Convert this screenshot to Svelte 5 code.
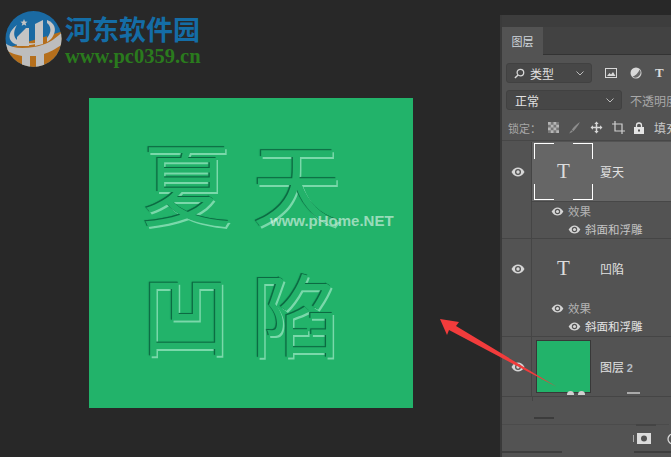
<script>
</script>

{#snippet eyeIcon()}
  <svg class="eye" viewBox="0 0 14 10" width="14" height="10" aria-hidden="true">
    <path d="M0.5 5C2.5 1.6 4.6 0.5 7 0.5S11.5 1.6 13.5 5C11.5 8.4 9.4 9.5 7 9.5S2.5 8.4 0.5 5Z" fill="#d6d6d6"/>
    <circle cx="7" cy="5" r="3" fill="#535353"/>
    <circle cx="7" cy="5" r="1.7" fill="#d6d6d6"/>
  </svg>
{/snippet}

<div class="page">
  <div class="canvas">
    <div class="line l1"><span>夏</span><span>天</span></div>
    <div class="line l2"><span>凹</span><span>陷</span></div>
  </div>

  <section class="panel">
    <div class="topstrip"></div>
    <div class="tabs"><div class="tab">图层</div></div>

    <div class="row filter">
      <div class="select s1">
        <svg viewBox="0 0 12 12" width="11" height="11"><circle cx="7" cy="5" r="3.6" fill="none" stroke="#d8d8d8" stroke-width="1.4"/><path d="M4.4 7.6L1 11" stroke="#d8d8d8" stroke-width="1.6"/></svg>
        <span>类型</span>
        <svg class="chev" viewBox="0 0 8 5" width="8" height="5"><path d="M.5.5L4 4 7.5.5" fill="none" stroke="#bbb"/></svg>
      </div>
      <svg class="ico" viewBox="0 0 12 10" width="12" height="10"><rect x=".5" y=".5" width="11" height="9" fill="none" stroke="#d8d8d8"/><path d="M2 8l2.500-3 1.500 1.500 2-2.500 2.500 4z" fill="#d8d8d8"/></svg>
      <svg class="ico" viewBox="0 0 12 12" width="12" height="12"><circle cx="6" cy="6" r="5.500" fill="#d8d8d8"/><path d="M9.500 2.500A5 5 0 0 1 2.500 9.500C5 9 8.500 6 9.500 2.500Z" fill="#6a6a6a"/></svg>
      <span class="tee">T</span>
    </div>

    <div class="row mode">
      <div class="select s2">
        <span>正常</span>
        <svg class="chev" viewBox="0 0 8 5" width="8" height="5"><path d="M.5.500L4 4 7.500.500" fill="none" stroke="#bbb"/></svg>
      </div>
      <span class="dim">不透明度</span>
    </div>

    <div class="row lock">
      <span class="dim small">锁定：</span>
      <svg viewBox="0 0 10 10" width="11" height="11"><rect width="10" height="10" fill="#777"/><path d="M0 0h2.500v2.500H0zM5 0h2.500v2.500H5zM2.500 2.500H5V5H2.500zM7.500 2.500H10V5H7.500zM0 5h2.500v2.500H0zM5 5h2.500v2.500H5zM2.500 7.500H5V10H2.500zM7.500 7.500H10V10H7.500z" fill="#b5b5b5"/></svg>
      <svg viewBox="0 0 12 12" width="13" height="13"><path d="M11 1C8 3 5 6 3.500 8L5 9.500C7 7 9.500 4.500 11 1ZM3 8.500L1 11.500 4.500 10Z" fill="#8c8c8c"/></svg>
      <svg viewBox="0 0 12 12" width="13" height="13"><path d="M6 .5L8 2.700H6.700v2.600h2.600V4L11.500 6 9.300 8V6.700H6.700v2.600H8L6 11.500 4 9.300h1.300V6.700H2.700V8L.5 6 2.700 4v1.300h2.600V2.700H4Z" fill="#d8d8d8"/></svg>
      <svg viewBox="0 0 13 13" width="13" height="13"><path d="M3 0v10h10M0 3h10v10" fill="none" stroke="#d0d0d0" stroke-width="1.200"/></svg>
      <svg viewBox="0 0 10 12" width="10" height="12"><path d="M2.500 5V3.500a2.500 2.500 0 0 1 5 0V5" fill="none" stroke="#e4e4e4" stroke-width="1.300"/><rect y="5" width="10" height="7" fill="#e4e4e4"/><rect x="4" y="7.500" width="2" height="2" fill="#535353"/></svg>
      <span class="dim fill">填充</span>
    </div>

    <div class="layers">
      <div class="layer l-a">
        <div class="eyecol">{@render eyeIcon()}</div>
        <div class="body">
          <div class="head selected">
            <div class="thumb framed">
              <i class="c tl"></i><i class="c tr"></i><i class="c bl"></i><i class="c br"></i>
              <span class="big-t">T</span>
            </div>
            <span class="name">夏天</span>
          </div>
          <div class="fx">{@render eyeIcon()}<span>效果</span></div>
          <div class="fx sub">{@render eyeIcon()}<span>斜面和浮雕</span></div>
        </div>
      </div>

      <div class="layer l-b">
        <div class="eyecol">{@render eyeIcon()}</div>
        <div class="body">
          <div class="head">
            <div class="thumb"><span class="big-t">T</span></div>
            <span class="name">凹陷</span>
          </div>
          <div class="fx">{@render eyeIcon()}<span>效果</span></div>
          <div class="fx sub bright">{@render eyeIcon()}<span>斜面和浮雕</span></div>
        </div>
      </div>

      <div class="layer l-c">
        <div class="eyecol">{@render eyeIcon()}</div>
        <div class="body">
          <div class="head">
            <div class="swatch"></div>
            <span class="name">图层 <b>2</b></span>
          </div>
        </div>
        <i class="bump b1"></i><i class="bump b2"></i><i class="frag"></i>
      </div>
    </div>

    <div class="rest">
      <i class="smudge sm0"></i>
      <i class="smudge sm1"></i>
      <i class="smudge sm2"></i>
      <i class="smudge sm3"></i>
    </div>

    <div class="foot">
      <i class="tick"></i>
      <svg viewBox="0 0 14 11" width="14" height="11"><rect width="14" height="11" fill="#dcdcdc"/><circle cx="7" cy="5.500" r="3" fill="#535353"/></svg>
      <svg viewBox="0 0 12 12" width="12" height="12"><circle cx="6" cy="6" r="5" fill="none" stroke="#d8d8d8" stroke-width="1.300"/><path d="M6 1A5 5 0 0 1 6 11Z" fill="#d8d8d8"/></svg>
      <i class="edge e1"></i><i class="edge e2"></i>
    </div>
  </section>

  <div class="logo">
    <svg class="mark" viewBox="0 0 58 58" width="58" height="58" aria-hidden="true">
      <defs><clipPath id="disc"><circle cx="29.500" cy="28" r="28"/></clipPath></defs>
      <g clip-path="url(#disc)">
        <rect width="58" height="58" fill="#1a6aa3"/>
        <path d="M0 38L60 20V60H0Z" fill="#b56f1c"/>
        <path d="M0 31C6 37 16 38 30 36C42 34 52 28 60 19V32C52 38 46 41 40 43V58H32V45H26V58H18V45C8 43 3 40 0 37Z" fill="#bdbdbd"/>
        <path d="M13 14C5 20 3 27 9 32C16 36 28 35 38 31C27 33 16 33 12 28C9 24 10 19 13 14Z" fill="#c6c6c6"/>
        <path d="M13 26L22 17H25V35H13ZM31 13L39 9V33L31 35Z" fill="#c4c4c4"/>
        <path d="M43 9C51 12 52 18 50 23C48 28 45 30 43 31Z" fill="#c4c4c4"/>
        <path d="M43 12C47 15 48 21 43 27Z" fill="#1a6aa3"/>
        <path d="M20 8l1 2.500 2.600.2-2 1.600.7 2.500-2.300-1.400-2.300 1.400.7-2.500-2-1.600 2.600-.2Z" fill="#c4c4c4"/>
      </g>
    </svg>
    <div class="brand">
      <div class="cn">河东软件园</div>
      <div class="url">www.pc0359.cn</div>
    </div>
  </div>

  <div class="mark-text">www.pHome.NET</div>

  <svg class="arrow" viewBox="0 0 120 72" width="120" height="72" aria-hidden="true">
    <path d="M0 0L19 3 16 7 117 68 9 11 7 16Z" fill="#f23c3c"/>
  </svg>
</div>

<style>
  :global(body) { margin: 0; background: #282828; }
  .page {
    position: relative;
    width: 671px;
    height: 457px;
    overflow: hidden;
    display: flex;
    align-items: flex-start;
    background: #282828;
    font-family: "Noto Sans CJK SC", "Noto Sans", sans-serif;
  }
  .canvas {
    flex: none;
    width: 324px;
    height: 310px;
    margin: 98px 0 0 89px;
    background: #22b36a;
    display: flex;
    flex-direction: column;
    font-size: 90px;
    line-height: 1;
  }
  .line { display: flex; gap: 20px; padding-left: 53px; }
  .l1 { margin-top: 37px; }
  .l2 { margin-top: 41px; padding-left: 52px; }
  .line span {
    color: #23b26a;
    text-shadow: -1px -1px 0 #0c6a42, -1.500px -1.500px 1px #12804f, 1.500px 1.500px 0.500px #7ad8aa;
  }
  .panel {
    flex: none;
    width: 171px;
    height: 442px;
    margin: 15px 0 0 87px;
    box-sizing: border-box;
    background: #535353;
    border-left: 2px solid #3a3a3a;
    color: #d4d4d4;
    font-size: 11px;
    display: flex;
    flex-direction: column;
    overflow: hidden;
    position: relative;
  }
  .topstrip { height: 12px; flex: none; background: #3d3d3d; }
  .tabs { height: 28px; flex: none; background: #424242; border-bottom: 1px solid #333; display: flex; box-sizing: border-box; }
  .tab { width: 41px; height: 28px; background: #535353; display: flex; align-items: center; justify-content: center; font-size: 11px; color: #cfd6dc; }
  .row { display: flex; align-items: center; flex: none; }
  .row > svg { flex: none; }
  .filter { height: 22px; margin-top: 7px; padding-left: 4px; gap: 13px; }
  .select {
    flex: none;
    box-sizing: border-box;
    background: #474747;
    border: 1px solid #414141;
    border-radius: 3px;
    display: flex;
    align-items: center;
    color: #e0e0e0;
    font-size: 12px;
  }
  .s1 { width: 86px; height: 20px; padding: 0 7px; gap: 5px; }
  .s2 { width: 116px; height: 20px; padding: 0 7px 0 8px; }
  .chev { margin-left: auto; }
  .ico { flex: none; }
  .tee { font-family: "Liberation Serif", serif; font-weight: 700; font-size: 13px; color: #dcdcdc; }
  .mode { height: 20px; margin-top: 6px; padding-left: 4px; gap: 8px; }
  .dim { color: #a8a8a8; font-size: 12px; white-space: nowrap; }
  .small { font-size: 11px; margin-left: 6px; }
  .lock { height: 25px; gap: 9px; border-bottom: 1px solid #474747; margin-top: 5px; margin-bottom: 1px; box-sizing: content-box; }
  .lock .small { flex: none; margin-right: -2px; }
  .fill { flex: none; margin-left: 1px; color: #c8c8c8; }
  .layers { flex: none; }
  .layer { position: relative; display: flex; border-bottom: 1px solid #454545; box-sizing: border-box; }
  .l-a { height: 97px; }
  .l-b { height: 98px; }
  .l-c { height: 60px; }
  .eyecol { flex: none; width: 30px; border-right: 1px solid #454545; box-sizing: border-box; }
  .eyecol .eye { display: block; margin: 25px 0 0 9px; }
  .body { flex: 1; min-width: 0; }
  .head { height: 60px; display: flex; align-items: center; box-sizing: border-box; border-bottom: 1px solid transparent; }
  .selected { background: #666; border-bottom-color: #474747; }
  .thumb { position: relative; flex: none; width: 59px; height: 57px; margin-left: 2px; display: flex; align-items: center; justify-content: center; }
  .big-t { font-family: "Liberation Serif", serif; font-size: 21px; color: #dcdcdc; line-height: 1; }
  .c { position: absolute; width: 19px; height: 15px; border: 0 solid #fff; }
  .tl { left: 0; top: 0; border-width: 1px 0 0 1px; }
  .tr { right: 0; top: 0; border-width: 1px 1px 0 0; }
  .bl { left: 0; bottom: 0; border-width: 0 0 1px 1px; }
  .br { right: 0; bottom: 0; border-width: 0 1px 1px 0; }
  .name { margin-left: 7px; font-size: 12px; color: #e2e2e2; white-space: nowrap; }
  .name b { font-family: "Liberation Sans", sans-serif; font-weight: 700; font-size: 11px; color: #b4bcc4; }
  .fx { height: 18px; display: flex; align-items: center; gap: 4px; padding-left: 19px; font-size: 11.500px; color: #b4b4b4; white-space: nowrap; }
  .fx .eye { flex: none; width: 13px; height: 9px; }
  .sub { padding-left: 36px; color: #c4c4c4; }
  .bright { color: #e4e4e4; }
  .swatch { flex: none; width: 53px; height: 51px; margin-left: 4px; background: #22b36a; border: 1px solid #383838; }
  .l-c .name { margin-left: 9px; }
  .bump { position: absolute; top: 54px; width: 7px; height: 4px; border-radius: 4px 4px 0 0; background: #d0d0d0; }
  .b1 { left: 65px; }
  .b2 { left: 76px; }
  .frag { position: absolute; top: 55px; left: 125px; width: 13px; height: 2px; background: #aaa; }
  .rest { flex: 1; position: relative; }
  .smudge { position: absolute; background: #3c3c3c; filter: blur(.6px); }
  .sm0 { left: 30px; top: 0; width: 1px; height: 4px; background: #454545; filter: none; }
  .sm1 { left: 32px; top: 20px; width: 20px; height: 2px; }
  .sm2 { left: 0; top: 27px; width: 167px; height: 1px; background: #4b4b4b; }
  .sm3 { left: 134px; top: 27px; width: 20px; height: 2px; background: #444; }
  .foot { position: relative; height: 33px; box-sizing: border-box; padding-bottom: 4px; flex: none; display: flex; align-items: center; justify-content: flex-end; gap: 16px; margin-right: -8px; }
  .tick { width: 1px; height: 7px; background: #aaa; margin-right: -13px; }
  .edge { position: absolute; bottom: 4px; height: 2px; background: #3e3e3e; }
  .e1 { left: 0; width: 60px; }
  .e2 { left: 132px; width: 40px; }
  .logo { position: absolute; left: 4px; top: 11px; display: flex; gap: 3px; }
  .mark { flex: none; }
  .brand { padding-top: 1px; }
  .cn { color: #146da6; font-size: 27px; font-weight: 700; line-height: 34px; white-space: nowrap; }
  .url { color: #2a7a1d; font-family: "Liberation Serif", serif; font-weight: 700; font-size: 20.500px; line-height: 20px; white-space: nowrap; }
  .mark-text { position: absolute; left: 270px; top: 212px; color: rgba(255,255,255,.55); font-family: "Liberation Sans", sans-serif; font-weight: 700; font-size: 15px; white-space: nowrap; }
  .arrow { position: absolute; left: 440px; top: 319px; }
</style>
